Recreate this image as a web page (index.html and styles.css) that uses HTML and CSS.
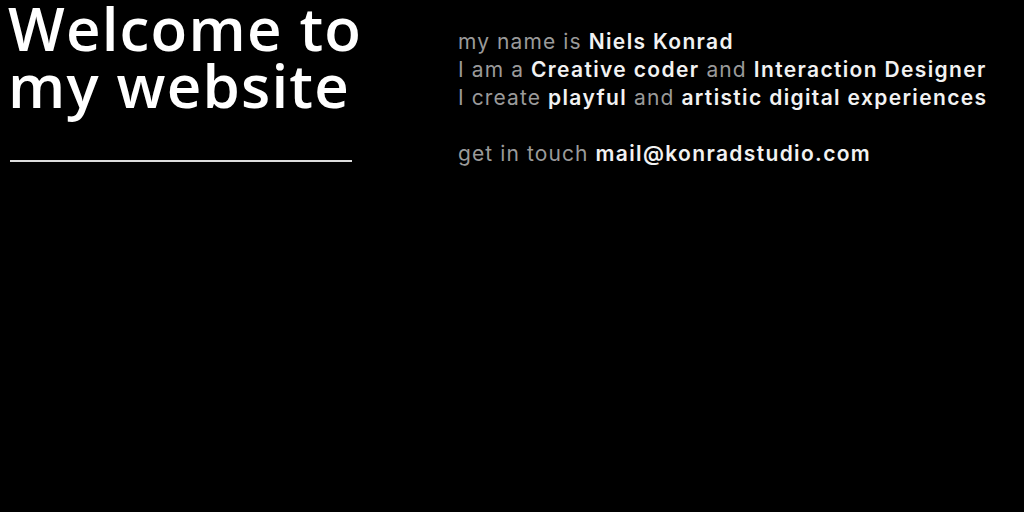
FILE: index.html
```html
<!DOCTYPE html>
<html>
<head>
<meta charset="utf-8">
<link rel="stylesheet" href="styles.css">
</head>
<body>
<main class="page">
  <section class="intro">
    <h1 class="title">Welcome to<br>my website</h1>
    <hr class="rule">
  </section>
  <section class="about">
    <p class="line">my name is <b>Niels Konrad</b></p>
    <p class="line">I am a <b>Creative coder</b> and <b>Interaction Designer</b></p>
    <p class="line">I create <b>playful</b> and <b>artistic digital experiences</b></p>
    <p class="line contact">get in touch <b>mail@konradstudio.com</b></p>
  </section>
</main>
</body>
</html>
```
FILE: styles.css
```css
html, body {
  margin: 0;
  background: #000;
}
body {
  padding: 0 8px;
  font-family: "Open Sans", "DejaVu Sans", sans-serif;
  color: #fff;
}
.page {
  display: flex;
}
.intro {
  width: 450px;
  flex: none;
}
.title {
  margin: 0;
  font-size: 60px;
  line-height: 57px;
  font-weight: 600;
  letter-spacing: 1.2px;
  color: #fff;
}
.rule {
  margin: 46px 0 0 2px;
  width: 342px;
  border: 0;
  height: 2px;
  background: #ddd;
}
.about {
  padding-top: 28px;
}
.line {
  margin: 0;
  font-family: "Inter", "Open Sans", sans-serif;
  font-size: 21px;
  line-height: 28px;
  font-weight: 400;
  letter-spacing: 1.1px;
  color: #9a9a9a;
}
.line b {
  font-weight: 600;
  letter-spacing: 1.35px;
  color: #f2f2f2;
}
.contact {
  margin-top: 28px;
}
```
